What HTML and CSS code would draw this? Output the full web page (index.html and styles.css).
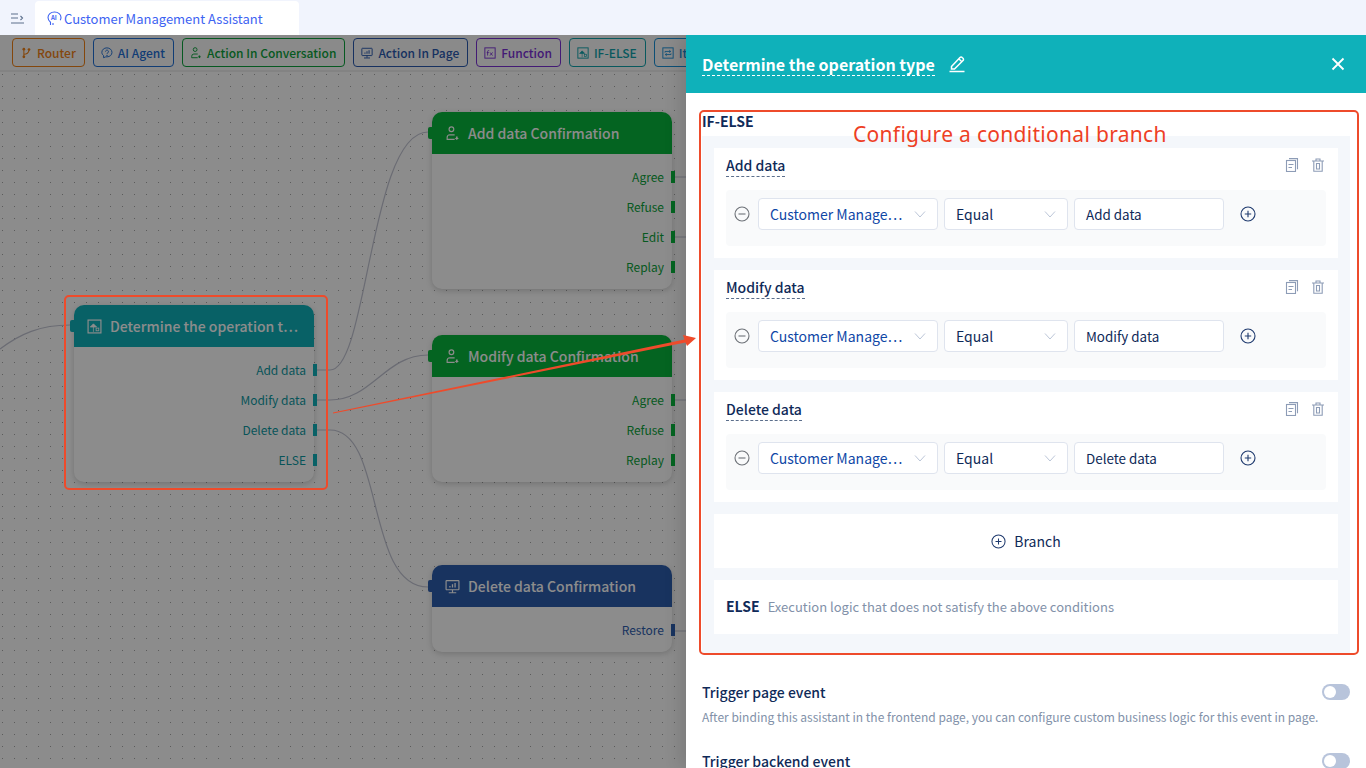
FILE: index.html
```html
<!DOCTYPE html>
<html lang="en">
<head>
    <meta charset="UTF-8">
    <title>Customer Management Assistant</title>
    <link rel="stylesheet" href="styles.css">
</head>
<body>
    <svg class="defs" width="0" height="0">
        <symbol id="i-person" viewBox="0 0 14 14"><g fill="none" stroke="currentColor" stroke-width="1.1"><circle cx="6" cy="3" r="2.2"/><path d="M9 8.2H4.5A2.6 2.6 0 0 0 2 10.8v1.7h7"/></g><path d="M10.2 9.8h1.6v1.4h1.2l-2 1.8-2-1.8h1.2z" fill="currentColor"/></symbol>
        <symbol id="i-branch" viewBox="0 0 14 14"><g fill="none" stroke="currentColor" stroke-width="1.2"><path d="M4.5 3v8M4.5 8.5C8 8.5 10 7 10.5 4"/></g><g fill="currentColor"><circle cx="4.5" cy="2.5" r="1.6"/><circle cx="4.5" cy="11.5" r="1.6"/><circle cx="10.5" cy="3" r="1.6"/></g></symbol>
        <symbol id="i-agent" viewBox="0 0 14 14"><g fill="none" stroke="currentColor" stroke-width="1.1"><path d="M3 12.5V10C1.500 8.800 1 7.500 1 6.200 1 3.300 3.500 1 6.800 1s6 2.300 6 5.200c0 3-2.400 5.300-5.800 5.300H5.500z"/><path d="M5.300 5.300a1.700 1.700 0 1 1 2.600 1.500c-.6.300-.9.700-.9 1.300"/></g><circle cx="7" cy="9.800" r=".8" fill="currentColor"/></symbol>
        <symbol id="i-screen" viewBox="0 0 14 14"><g fill="none" stroke="currentColor" stroke-width="1.1"><rect x="1" y="1.500" width="12" height="8.500" rx=".6"/><path d="M7 10v2.500M3.500 12.800h7"/></g><path d="M4 8h1.200V6.500H4zM6.400 8h1.200V5H6.400zM8.800 8H10V3.800H8.800z" fill="currentColor"/></symbol>
        <symbol id="i-fx" viewBox="0 0 14 14"><rect x="1" y="1" width="12" height="12" fill="none" stroke="currentColor" stroke-width="1.1"/><path d="M6 4.200H5.200c-.7 0-1 .4-1 1V10M3.200 6.500h2.400M7 6.300l3 3.700M10 6.300L7 10" fill="none" stroke="currentColor"/></symbol>
        <symbol id="i-ifelse" viewBox="0 0 14 14"><rect x="1" y="1" width="12" height="12" fill="none" stroke="currentColor" stroke-width="1.1"/><path d="M6 12V6M3 7.500l3-3 3 3z" fill="currentColor" stroke="currentColor" stroke-width=".7"/><rect x="8.500" y="8.500" width="2.500" height="2.500" fill="none" stroke="currentColor" stroke-width=".8"/></symbol>
        <symbol id="i-loop" viewBox="0 0 14 14"><rect x="1" y="1" width="12" height="12" fill="none" stroke="currentColor" stroke-width="1.1"/><path d="M3.500 6.500V5.200h6.500M8.500 3.800L10.200 5.200 8.500 6.500M10.500 7.500v1.300H4M5.500 7.500L3.800 8.800l1.700 1.400" fill="none" stroke="currentColor"/></symbol>
        <symbol id="i-plus" viewBox="0 0 16 16"><g fill="none" stroke="currentColor" stroke-width="1.100"><circle cx="8" cy="8" r="7"/><path d="M8 4.800v6.400M4.800 8h6.400"/></g></symbol>
        <symbol id="i-minus" viewBox="0 0 16 16"><g fill="none" stroke="currentColor" stroke-width="1.100"><circle cx="8" cy="8" r="7"/><path d="M4.500 8h7"/></g></symbol>
        <symbol id="i-chev" viewBox="0 0 12 8"><path d="M1 1.500l5 5.500 5-5.500" fill="none" stroke="currentColor"/></symbol>
        <symbol id="i-copy" viewBox="0 0 14 14"><g fill="none" stroke="currentColor" stroke-width="1.100"><rect x="1.500" y="2.500" width="9" height="11"/><path d="M4 .6h8.500v10.600M3.500 6.500h5M3.500 9.500h3.500"/></g></symbol>
        <symbol id="i-trash" viewBox="0 0 14 14"><g fill="none" stroke="currentColor" stroke-width="1.100"><path d="M1 3h12M5 3V1h4v2M2.800 3v10.300h8.400V3"/><path d="M5.500 5.500h3v5.500h-3z"/></g></symbol>
    </svg>

    <header class="topbar">
        <svg class="menu-icon" width="14" height="14" viewBox="0 0 14 14"><path d="M1 3h7M1 7h7M1 12h13M10.500 5l2 2-2 2" fill="none" stroke="#5c6f8c" stroke-width="1.100"/></svg>
        <div class="tab">
            <svg class="tab-icon" width="15" height="15" viewBox="0 0 15 15"><path d="M3.500 14v-2.800C2 10 1 8.500 1 6.500 1 3.400 3.700 1 7.500 1S14 3.400 14 6.500c0 1-.3 2-.8 2.800M6 14v-2" fill="none" stroke="currentColor" stroke-width="1.100"/><text x="4" y="9" class="tab-icon-text">AI</text></svg>
            <span>Customer Management Assistant</span>
        </div>
    </header>

    <main class="stage">
        <nav class="toolbar">
            <a class="tool tool-orange"><svg class="ic"><use href="#i-branch"/></svg>Router</a>
            <a class="tool tool-blue"><svg class="ic"><use href="#i-agent"/></svg>AI Agent</a>
            <a class="tool tool-green"><svg class="ic"><use href="#i-person"/></svg>Action In Conversation</a>
            <a class="tool tool-navy"><svg class="ic"><use href="#i-screen"/></svg>Action In Page</a>
            <a class="tool tool-purple"><svg class="ic"><use href="#i-fx"/></svg>Function</a>
            <a class="tool tool-teal"><svg class="ic"><use href="#i-ifelse"/></svg>IF-ELSE</a>
            <a class="tool tool-sky"><svg class="ic"><use href="#i-loop"/></svg>It</a>
        </nav>

        <section class="canvas">
            <svg class="edges" width="686" height="696" viewBox="0 0 686 696">
                <defs>
                    <pattern id="dots" width="12" height="12" patternUnits="userSpaceOnUse"><rect x="2" y="2" width="1" height="1" fill="#a6a6a6"/></pattern>
                </defs>
                <rect width="686" height="696" fill="url(#dots)"/>
                <path d="M0 277C20 262 40 253 70 253"/>
                <path d="M317 298H330C368 298 370 60 428 60"/>
                <path d="M317 328H330C372 328 385 283 428 283"/>
                <path d="M317 358H330C385 358 365 515 428 515"/>
                <path d="M675 105H686M675 165H686M675 328H686M675 559H686"/>
            </svg>

            <article class="node node-teal node-main">
                <span class="port-in"></span>
                <div class="node-head"><svg class="node-icon"><use href="#i-ifelse"/></svg><span class="node-title">Determine the operation t⋯</span></div>
                <ul class="node-rows">
                    <li>Add data</li><li>Modify data</li><li>Delete data</li><li>ELSE</li>
                </ul>
            </article>
            <article class="node node-green node-add">
                <span class="port-in"></span>
                <div class="node-head"><svg class="node-icon"><use href="#i-person"/></svg><span class="node-title">Add data Confirmation</span></div>
                <ul class="node-rows">
                    <li>Agree</li><li>Refuse</li><li>Edit</li><li>Replay</li>
                </ul>
            </article>
            <article class="node node-green node-modify">
                <span class="port-in"></span>
                <div class="node-head"><svg class="node-icon"><use href="#i-person"/></svg><span class="node-title">Modify data Confirmation</span></div>
                <ul class="node-rows">
                    <li>Agree</li><li>Refuse</li><li>Replay</li>
                </ul>
            </article>
            <article class="node node-navy node-delete">
                <span class="port-in"></span>
                <div class="node-head"><svg class="node-icon"><use href="#i-screen"/></svg><span class="node-title">Delete data Confirmation</span></div>
                <ul class="node-rows">
                    <li>Restore</li>
                </ul>
            </article>
        </section>

        <div class="mask"></div>

        <aside class="drawer">
            <div class="drawer-head">
                <span class="drawer-title">Determine the operation type</span>
                <svg class="edit-icon" width="18" height="18" viewBox="0 0 18 18"><path d="M3.500 11.500L12 2.500a1.500 1.500 0 0 1 2.200 0l.8.8a1.500 1.500 0 0 1 0 2.200L6.500 14H3.500zM10.800 3.800l3 3M1.500 16.500h15" fill="none" stroke="#fff" stroke-width="1.500"/></svg>
                <svg class="close-icon" width="14" height="14" viewBox="0 0 14 14"><path d="M1.500 1.500l11 11M12.500 1.500l-11 11" stroke="#fff" stroke-width="1.800"/></svg>
            </div>
            <div class="drawer-body">
                <h3 class="section-title">IF-ELSE</h3>
                <div class="branches">
                    <div class="branch">
                        <div class="branch-top">
                            <span class="branch-name">Add data</span>
                            <span class="branch-tools"><svg class="tool-ic"><use href="#i-copy"/></svg><svg class="tool-ic"><use href="#i-trash"/></svg></span>
                        </div>
                        <div class="cond">
                            <svg class="cond-minus"><use href="#i-minus"/></svg>
                            <div class="field field-var"><span class="field-text">Customer Manage⋯</span><svg class="chev"><use href="#i-chev"/></svg></div>
                            <div class="field field-op"><span>Equal</span><svg class="chev"><use href="#i-chev"/></svg></div>
                            <div class="field field-val">Add data</div>
                            <svg class="cond-plus"><use href="#i-plus"/></svg>
                        </div>
                    </div>
                    <div class="branch">
                        <div class="branch-top">
                            <span class="branch-name">Modify data</span>
                            <span class="branch-tools"><svg class="tool-ic"><use href="#i-copy"/></svg><svg class="tool-ic"><use href="#i-trash"/></svg></span>
                        </div>
                        <div class="cond">
                            <svg class="cond-minus"><use href="#i-minus"/></svg>
                            <div class="field field-var"><span class="field-text">Customer Manage⋯</span><svg class="chev"><use href="#i-chev"/></svg></div>
                            <div class="field field-op"><span>Equal</span><svg class="chev"><use href="#i-chev"/></svg></div>
                            <div class="field field-val">Modify data</div>
                            <svg class="cond-plus"><use href="#i-plus"/></svg>
                        </div>
                    </div>
                    <div class="branch">
                        <div class="branch-top">
                            <span class="branch-name">Delete data</span>
                            <span class="branch-tools"><svg class="tool-ic"><use href="#i-copy"/></svg><svg class="tool-ic"><use href="#i-trash"/></svg></span>
                        </div>
                        <div class="cond">
                            <svg class="cond-minus"><use href="#i-minus"/></svg>
                            <div class="field field-var"><span class="field-text">Customer Manage⋯</span><svg class="chev"><use href="#i-chev"/></svg></div>
                            <div class="field field-op"><span>Equal</span><svg class="chev"><use href="#i-chev"/></svg></div>
                            <div class="field field-val">Delete data</div>
                            <svg class="cond-plus"><use href="#i-plus"/></svg>
                        </div>
                    </div>
                    <div class="add-branch"><svg class="add-icon"><use href="#i-plus"/></svg>Branch</div>
                    <div class="else-row"><b>ELSE</b><span>Execution logic that does not satisfy the above conditions</span></div>
                </div>

                <div class="option">
                    <div class="option-top"><span class="option-title">Trigger page event</span><span class="switch"></span></div>
                    <p class="option-desc">After binding this assistant in the frontend page, you can configure custom business logic for this event in page.</p>
                </div>
                <div class="option">
                    <div class="option-top"><span class="option-title">Trigger backend event</span><span class="switch"></span></div>
                </div>
            </div>
        </aside>
    </main>

    <!-- red notes drawn on top of the screenshot -->
    <div class="note-box note-box-node"></div>
    <div class="note-box note-box-panel"></div>
    <div class="note-text">Configure a conditional branch</div>
    <svg class="note-arrow" width="1366" height="768" viewBox="0 0 1366 768"><polygon points="333,412.600 684.500,339.500 683,335 696,338 687,346 685.500,342.500 333,413.600"/></svg>
</body>
</html>
```

FILE: styles.css
```css
* {
    box-sizing: border-box;
}

html, body {
    margin: 0;
    height: 100%;
    overflow: hidden;
}

body {
    position: relative;
    display: flex;
    flex-direction: column;
    font-family: "Noto Sans CJK SC", "Noto Sans", sans-serif;
    font-size: 14px;
    color: #0f2a58;
    background: #f1f4fd;
}

.defs {
    position: absolute;
}

/* top bar */
.topbar {
    height: 35px;
    display: flex;
    align-items: flex-end;
    background: #f1f4fd;
}

.menu-icon {
    margin: 0 11px 10px 10px;
}

.tab {
    width: 264px;
    height: 34px;
    display: flex;
    align-items: center;
    gap: 2px;
    padding-left: 12px;
    background: #fff;
    border-radius: 4px 4px 0 0;
    font-size: 13px;
    color: #3d63f2;
}

.tab-icon-text {
    font-size: 6px;
    font-weight: 700;
    fill: currentColor;
}

/* editor */
.stage {
    position: relative;
    flex: 1;
    display: flex;
    flex-direction: column;
    overflow: hidden;
}

.toolbar {
    height: 37px;
    flex: none;
    display: flex;
    align-items: center;
    gap: 8px;
    padding-left: 12px;
    background: #fbfbfb;
    border-bottom: 2px solid #eee;
}

.tool {
    height: 29px;
    display: flex;
    align-items: center;
    gap: 5px;
    padding: 0 8px 0 7px;
    border: 1px solid currentColor;
    border-radius: 4px;
    font-size: 12px;
    font-weight: 500;
    white-space: nowrap;
}

.ic {
    width: 12px;
    height: 12px;
    flex: none;
}

.tool-orange { color: #f08217; }
.tool-blue { color: #1f6fd6; }
.tool-green { color: #0ca33c; }
.tool-navy { color: #2a5ab0; }
.tool-purple { color: #7a31d6; }
.tool-teal { color: #0fa3ac; }
.tool-sky { color: #1790d8; }

.canvas {
    position: relative;
    flex: 1;
    background-color: #fff;
}

.edges {
    position: absolute;
    left: 0;
    top: 0;
}

.edges path {
    fill: none;
    stroke: #c3c5d3;
    stroke-width: 1.2;
}

/* flow nodes, placed on the canvas */
.node {
    position: absolute;
    width: 240px;
    background: #fff;
    border-radius: 10px;
    box-shadow: 0 2px 6px rgba(0, 0, 0, .18);
}

.node-main { left: 74px; top: 233px; }
.node-add { left: 432px; top: 40px; }
.node-modify { left: 432px; top: 263px; }
.node-delete { left: 432px; top: 493px; }

.node-teal { color: #0fb1ba; --node: #0fb1ba; --label: #0e9aa3; }
.node-green { color: #08b63c; --node: #08b63c; --label: #0ba33a; }
.node-navy { color: #2d5dae; --node: #2d5dae; --label: #2d5dae; }

.port-in {
    position: absolute;
    left: -4px;
    top: 15px;
    width: 5px;
    height: 12px;
    border-radius: 2px 0 0 2px;
    background: var(--node);
}

.node-head {
    height: 42px;
    display: flex;
    align-items: center;
    gap: 8px;
    padding-left: 13px;
    background: var(--node);
    border-radius: 10px 10px 0 0;
    color: #fff;
}

.node-icon {
    width: 15px;
    height: 15px;
    flex: none;
}

.node-title {
    font-size: 14px;
    font-weight: 500;
    white-space: nowrap;
}

.node-rows {
    list-style: none;
    margin: 0;
    padding: 8px 0 7px;
}

.node-rows li {
    position: relative;
    height: 30px;
    line-height: 30px;
    padding-right: 8px;
    text-align: right;
    font-size: 12px;
    color: var(--label);
}

.node-rows li::after {
    content: "";
    position: absolute;
    right: -3px;
    top: 9px;
    width: 4px;
    height: 12px;
    background: var(--node);
}

/* dim layer under the drawer */
.mask {
    position: absolute;
    inset: 0;
    background: rgba(0, 0, 0, .45);
}

/* right drawer */
.drawer {
    position: absolute;
    right: 0;
    top: 0;
    bottom: 0;
    width: 680px;
    background: #fff;
    box-shadow: -6px 0 16px rgba(0, 0, 0, .12);
    overflow: hidden;
}

.drawer-head {
    height: 58px;
    display: flex;
    align-items: center;
    padding: 0 21px 0 16px;
    background: #0fb1ba;
}

.drawer-title {
    font-size: 16px;
    font-weight: 700;
    line-height: 22px;
    color: #fff;
    border-bottom: 1px dashed #fff;
}

.edit-icon {
    margin-left: 13px;
}

.close-icon {
    margin-left: auto;
}

.drawer-body {
    padding: 17px 16px 0;
}

.section-title {
    margin: 0;
    height: 26px;
    line-height: 22px;
    font-size: 14px;
    font-weight: 700;
}

.branches {
    display: flex;
    flex-direction: column;
    gap: 12px;
    padding: 12px 12px 20px;
    background: #f4f7fb;
}

.branch {
    height: 110px;
    padding: 7px 12px 0;
    background: #fff;
}

.branch-top {
    height: 35px;
    display: flex;
    justify-content: space-between;
    align-items: flex-start;
}

.branch-name {
    height: 22px;
    line-height: 20px;
    font-weight: 500;
    border-bottom: 1px dashed #5c6f8c;
}

.branch-tools {
    display: flex;
    gap: 12px;
    padding: 3px 1px 0 0;
    color: #8d9cb6;
}

.tool-ic {
    width: 14px;
    height: 14px;
}

.cond {
    height: 56px;
    display: flex;
    align-items: flex-start;
    gap: 6px;
    padding: 8px;
    background: #f9fafb;
    border-radius: 4px;
}

.cond-minus {
    width: 16px;
    height: 16px;
    margin: 8px 2px 0 0;
    color: #6e7278;
}

.cond-plus {
    width: 16px;
    height: 16px;
    margin: 8px 0 0 10px;
    color: #1f3a6e;
}

.field {
    height: 32px;
    display: flex;
    align-items: center;
    justify-content: space-between;
    padding: 0 11px;
    background: #fff;
    border: 1px solid #dfe4ee;
    border-radius: 4px;
}

.field-var { width: 180px; color: #0f47a6; }
.field-op { width: 124px; }
.field-val { width: 150px; font-size: 13.4px; }

.field-text {
    white-space: nowrap;
}

.chev {
    width: 12px;
    height: 8px;
    flex: none;
    color: #bcc6d8;
}

.add-branch {
    height: 54px;
    display: flex;
    align-items: center;
    justify-content: center;
    gap: 8px;
    background: #fff;
}

.add-icon {
    width: 15px;
    height: 15px;
    color: #1f3a6e;
}

.else-row {
    height: 54px;
    display: flex;
    align-items: center;
    gap: 8px;
    padding: 0 0 2px 12px;
    background: #fff;
}

.else-row span {
    font-size: 13px;
    color: #8291a9;
}

.option {
    margin-top: 28px;
}

.option + .option {
    margin-top: 24px;
}

.option-top {
    height: 20px;
    display: flex;
    align-items: center;
    justify-content: space-between;
}

.option-title {
    font-weight: 500;
}

.switch {
    position: relative;
    width: 28px;
    height: 16px;
    border-radius: 8px;
    background: #b8c4db;
}

.switch::before {
    content: "";
    position: absolute;
    left: 2px;
    top: 2px;
    width: 12px;
    height: 12px;
    border-radius: 50%;
    background: #fff;
}

.option-desc {
    margin: 5px 0 0;
    font-size: 12px;
    line-height: 20px;
    color: #8291a9;
}

/* annotations */
.note-box {
    position: absolute;
    border: 2px solid #ee4b2b;
    border-radius: 5px;
}

.note-box-node {
    left: 64px;
    top: 295px;
    width: 264px;
    height: 195px;
}

.note-box-panel {
    left: 699px;
    top: 110px;
    width: 660px;
    height: 545px;
}

.note-text {
    position: absolute;
    left: 853px;
    top: 120px;
    font-family: "Noto Sans", sans-serif;
    font-size: 21px;
    letter-spacing: .3px;
    line-height: 28px;
    color: #ee3f25;
    white-space: nowrap;
}

.note-arrow {
    position: absolute;
    left: 0;
    top: 0;
    pointer-events: none;
}

.note-arrow polygon {
    fill: #ee4b2b;
}
```
